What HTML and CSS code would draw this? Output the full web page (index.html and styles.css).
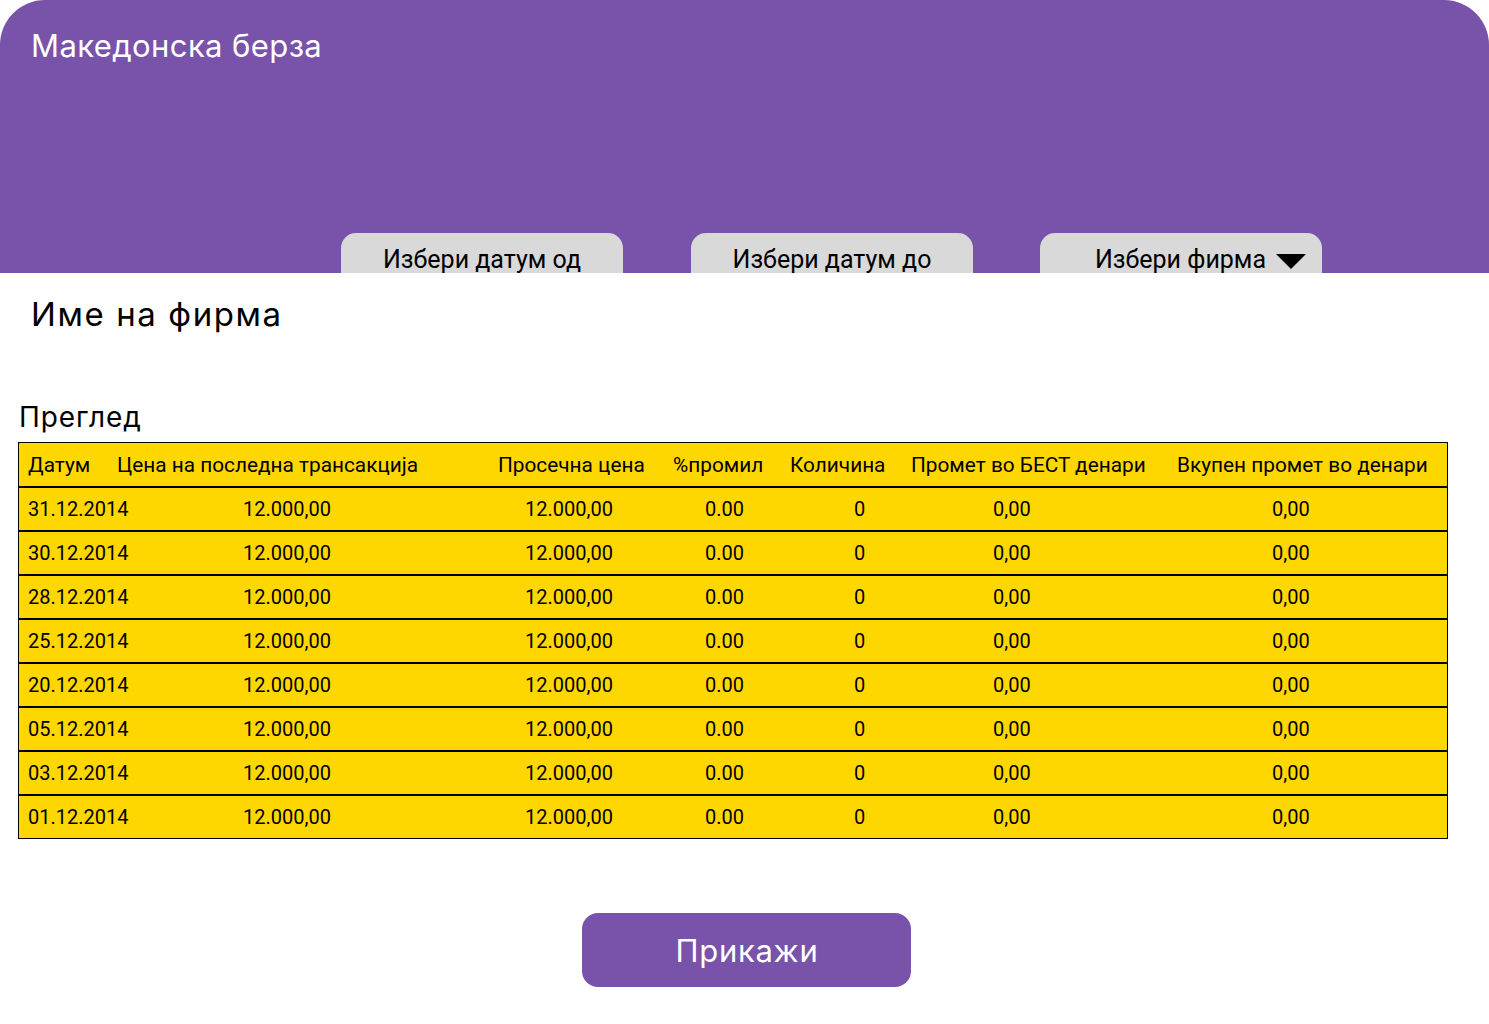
FILE: index.html
```html
<!DOCTYPE html>
<html lang="mk">
<head>
<meta charset="utf-8">
<title>Македонска берза</title>
<link rel="stylesheet" href="styles.css">
</head>
<body>
<header class="hero">
  <h1 class="brand">Македонска берза</h1>
  <nav class="tabs">
    <button class="tab">Избери датум од</button>
    <button class="tab">Избери датум до</button>
    <button class="tab tab-select">Избери фирма <span class="caret"></span></button>
  </nav>
</header>
<main class="content">
  <h2 class="company">Име на фирма</h2>
  <h3 class="section">Преглед</h3>
  <div class="table">
    <div class="row head">
      <div>Датум</div><div>Цена на последна трансакција</div><div>Просечна цена</div><div>%промил</div><div>Количина</div><div>Промет во БЕСТ денари</div><div>Вкупен промет во денари</div>
    </div>
    <div class="row data"><div>31.12.2014</div><div>12.000,00</div><div>12.000,00</div><div>0.00</div><div>0</div><div>0,00</div><div>0,00</div></div>
    <div class="row data"><div>30.12.2014</div><div>12.000,00</div><div>12.000,00</div><div>0.00</div><div>0</div><div>0,00</div><div>0,00</div></div>
    <div class="row data"><div>28.12.2014</div><div>12.000,00</div><div>12.000,00</div><div>0.00</div><div>0</div><div>0,00</div><div>0,00</div></div>
    <div class="row data"><div>25.12.2014</div><div>12.000,00</div><div>12.000,00</div><div>0.00</div><div>0</div><div>0,00</div><div>0,00</div></div>
    <div class="row data"><div>20.12.2014</div><div>12.000,00</div><div>12.000,00</div><div>0.00</div><div>0</div><div>0,00</div><div>0,00</div></div>
    <div class="row data"><div>05.12.2014</div><div>12.000,00</div><div>12.000,00</div><div>0.00</div><div>0</div><div>0,00</div><div>0,00</div></div>
    <div class="row data"><div>03.12.2014</div><div>12.000,00</div><div>12.000,00</div><div>0.00</div><div>0</div><div>0,00</div><div>0,00</div></div>
    <div class="row data"><div>01.12.2014</div><div>12.000,00</div><div>12.000,00</div><div>0.00</div><div>0</div><div>0,00</div><div>0,00</div></div>
  </div>
  <div class="actions">
    <button class="show">Прикажи</button>
  </div>
</main>
</body>
</html>
```
FILE: styles.css
```css
* { box-sizing: border-box; }
html, body { margin: 0; padding: 0; background: #fff; }
body {
  font-family: Inter, "Noto Sans", sans-serif;
  color: #000;
  width: 1489px;
}
.hero {
  background: #7853a9;
  height: 273px;
  border-radius: 45px 45px 0 0;
  display: flex;
  flex-direction: column;
  justify-content: space-between;
}
.brand {
  margin: 0;
  padding: 28px 0 0 31px;
  font-size: 31px;
  letter-spacing: 0.4px;
  font-weight: 400;
  color: #fff;
  line-height: 36px;
}
.tabs {
  display: flex;
  padding-left: 341px;
  gap: 68px;
}
.tab {
  width: 282px;
  height: 40px;
  border: none;
  background: #d9d9d9;
  border-radius: 15px 15px 0 0;
  font-family: Roboto, "Liberation Sans", sans-serif;
  font-size: 25px;
  color: #000;
  padding: 12px 0 0;
  line-height: 30px;
}
.tab:nth-child(3) { margin-left: -1px; }
.tab-select {
  display: flex;
  justify-content: flex-end;
  align-items: flex-start;
  padding-right: 16px;
}
.caret {
  display: inline-block;
  width: 0;
  height: 0;
  border-left: 15px solid transparent;
  border-right: 15px solid transparent;
  border-top: 15px solid #000;
  margin: 9px 0 0 10px;
}
.content {
  padding: 0 41px 0 18px;
}
.company {
  margin: 0;
  padding: 21px 0 0 13px;
  font-size: 33px;
  letter-spacing: 1.6px;
  font-weight: 400;
  line-height: 40px;
}
.section {
  margin: 0;
  padding: 66px 0 0 1px;
  font-size: 28px;
  letter-spacing: 0.9px;
  font-weight: 400;
  line-height: 34px;
}
.table {
  margin-top: 8px;
  background: #ffd700;
  border: 1px solid #000;
  width: 1430px;
}
.row {
  display: grid;
  grid-template-columns: 89px 381px 175px 117px 121px 266px 1fr;
  height: 44px;
  align-items: center;
  font-family: Roboto, "Liberation Sans", sans-serif;
  font-size: 20px;
}
.row.data { border-top: 2px solid #000; }
.row.head { height: 43px; padding-top: 1px; font-size: 20.8px; }
.row > div { padding-left: 9px; white-space: nowrap; }
.row.data > div:nth-child(2) { padding-left: 135px; }
.row.data > div:nth-child(3) { padding-left: 36px; }
.row.data > div:nth-child(4) { padding-left: 41px; }
.row.data > div:nth-child(5) { padding-left: 73px; }
.row.data > div:nth-child(6) { padding-left: 91px; }
.row.data > div:nth-child(7) { padding-left: 104px; }
.actions {
  display: flex;
  justify-content: center;
  padding-top: 74px;
  width: 1456px;
}
.show {
  width: 329px;
  height: 74px;
  border: none;
  border-radius: 16px;
  background: #7853a9;
  color: #fff;
  font-family: inherit;
  font-size: 31px;
  letter-spacing: 0.7px;
  padding-left: 8px;
}
```
